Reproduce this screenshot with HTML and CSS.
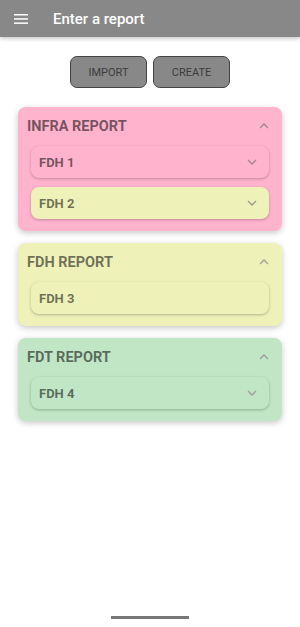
FILE: index.html
```html
<!DOCTYPE html>
<html>
    <head>
        <title>Enter a report</title>
        <link rel="stylesheet" href="styles.css">
    </head>
    <body>
        <div class="top-bar">
            <svg class="menu-icon" width="14" height="10" viewBox="0 0 14 10">
                <rect x="0" y="0" width="14" height="1.5" fill="white"/>
                <rect x="0" y="4.2" width="14" height="1.5" fill="white"/>
                <rect x="0" y="8.4" width="14" height="1.5" fill="white"/>
            </svg>
            <span class="top-title">Enter a report</span>
        </div>

        <div class="actions">
            <button class="action-button">IMPORT</button>
            <button class="action-button">CREATE</button>
        </div>

        <div class="report-list">

            <div class="report pink">
                <div class="report-head">
                    <span class="report-title">INFRA REPORT</span>
                    <svg class="chevron-up" width="10" height="6" viewBox="0 0 10 6">
                        <path d="M1 5 L5 1 L9 5" fill="none" stroke="#9a8a90" stroke-width="1.3"/>
                    </svg>
                </div>
                <div class="item pink">
                    <span>FDH 1</span>
                    <svg class="chevron-down" width="10" height="6" viewBox="0 0 10 6">
                        <path d="M1 1 L5 5 L9 1" fill="none" stroke="#9a8a90" stroke-width="1.3"/>
                    </svg>
                </div>
                <div class="item yellow">
                    <span>FDH 2</span>
                    <svg class="chevron-down" width="10" height="6" viewBox="0 0 10 6">
                        <path d="M1 1 L5 5 L9 1" fill="none" stroke="#9a9a8a" stroke-width="1.3"/>
                    </svg>
                </div>
            </div>

            <div class="report yellow">
                <div class="report-head">
                    <span class="report-title">FDH REPORT</span>
                    <svg class="chevron-up" width="10" height="6" viewBox="0 0 10 6">
                        <path d="M1 5 L5 1 L9 5" fill="none" stroke="#a0a090" stroke-width="1.3"/>
                    </svg>
                </div>
                <div class="item yellow">
                    <span>FDH 3</span>
                </div>
            </div>

            <div class="report green">
                <div class="report-head">
                    <span class="report-title">FDT REPORT</span>
                    <svg class="chevron-up" width="10" height="6" viewBox="0 0 10 6">
                        <path d="M1 5 L5 1 L9 5" fill="none" stroke="#a09aa0" stroke-width="1.3"/>
                    </svg>
                </div>
                <div class="item green">
                    <span>FDH 4</span>
                    <svg class="chevron-down" width="10" height="6" viewBox="0 0 10 6">
                        <path d="M1 1 L5 5 L9 1" fill="none" stroke="#a09aa0" stroke-width="1.3"/>
                    </svg>
                </div>
            </div>

        </div>

        <div class="home-bar"></div>
    </body>
</html>
```

FILE: styles.css
```css
body {
    margin: 0;
    width: 300px;
    height: 627px;
    background-color: white;
    font-family: Roboto, "Liberation Sans", sans-serif;
    position: relative;
    overflow: hidden;
}

.top-bar {
    height: 37px;
    background-color: #888888;
    display: flex;
    align-items: center;
    box-shadow: 0px 2px 4px rgba(0,0,0,0.2);
}

.menu-icon {
    margin-left: 14px;
    margin-right: 25px;
}

.top-title {
    color: white;
    font-size: 15px;
    font-weight: 500;
}

.actions {
    display: flex;
    justify-content: center;
    gap: 6px;
    margin-top: 19px;
}

.action-button {
    width: 77px;
    height: 32px;
    background-color: #888888;
    border: 1px solid #444444;
    border-radius: 7px;
    color: #3c3c3c;
    font-family: Roboto, "Liberation Sans", sans-serif;
    font-size: 11px;
    padding: 0;
}

.report-list {
    display: flex;
    flex-direction: column;
    gap: 12px;
    margin: 19px 18px 0 18px;
}

.report {
    border-radius: 8px;
    padding: 0 13px 12px 13px;
    box-shadow: 0px 2px 6px rgba(0,0,0,0.22);
    display: flex;
    flex-direction: column;
    gap: 9px;
}

.report-head {
    height: 39px;
    margin: 0 -1px -9px -4px;
    display: flex;
    align-items: center;
    justify-content: space-between;
}

.report-title {
    font-size: 14.5px;
    font-weight: 700;
    color: rgba(0,0,0,0.55);
}

.chevron-up {
    margin-right: 1px;
    margin-top: -2px;
}

.item {
    height: 32px;
    border-radius: 8px;
    padding: 0 12px 0 8px;
    display: flex;
    align-items: center;
    justify-content: space-between;
    box-shadow: 0px 1px 3px rgba(0,0,0,0.25);
    font-size: 13px;
    font-weight: 700;
    color: rgba(0,0,0,0.55);
}

.pink {
    background-color: #ffb3cd;
}

.yellow {
    background-color: #eef2b9;
}

.green {
    background-color: #c0e6c6;
}

.home-bar {
    position: absolute;
    left: 111px;
    bottom: 8px;
    width: 78px;
    height: 3px;
    background-color: #777777;
}
```
